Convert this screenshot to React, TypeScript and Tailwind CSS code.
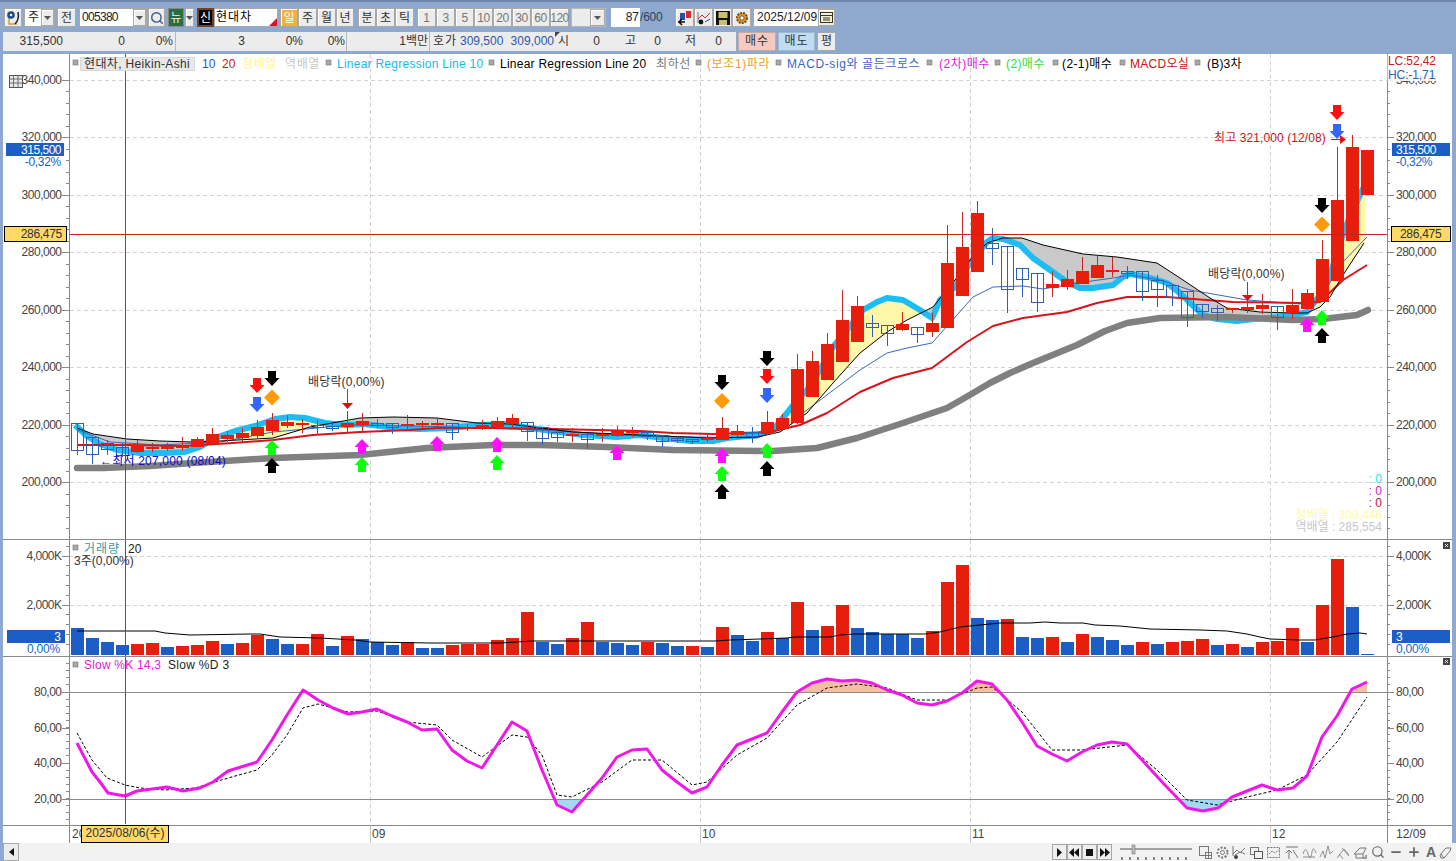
import React from 'react';
import { Search, Minus, Plus } from 'lucide-react';

type Pt = [number, number];
type C = [number, number, number, number, number];

const RED = '#e71e0c';
const BLUE = '#1b5fc6';
const HOLLOW = '#2a62b8';
const CROSS = '#e01c1c';

// body top, body bottom, wick top, wick bottom, red? (read off the 3x crops)
const c4: C[] = [
  [190, 270, 190, 285, 0], [230, 283, 230, 312, 0], [250, 268, 240, 285, 0], [262, 285, 250, 290, 0],
  [255, 275, 240, 278, 1], [262, 268, 250, 275, 1], [258, 266, 250, 272, 1], [258, 263, 232, 272, 1],
  [238, 260, 232, 262, 1], [222, 253, 205, 255, 1], [226, 236, 212, 245, 1], [220, 233, 205, 247, 1],
  [202, 228, 180, 235, 1], [180, 214, 158, 225, 1], [187, 198, 165, 205, 1], [188, 191, 178, 220, 1],
  [194, 202, 180, 225, 0], [197, 200, 188, 212, 0], [190, 200, 152, 220, 1], [183, 194, 160, 215, 1],
  [188, 190, 178, 205, 0], [190, 200, 190, 222, 0], [193, 197, 166, 212, 1], [189, 192, 182, 205, 1],
  [189, 193, 178, 205, 1], [190, 217, 190, 240, 0], [201, 205, 192, 212, 1], [195, 205, 180, 210, 1],
  [184, 201, 170, 207, 1], [175, 192, 162, 205, 1], [185, 212, 185, 242, 0],
];
const c5: C[] = [
  [680, 715, 680, 735, 0], [697, 712, 697, 725, 0], [702, 708, 685, 725, 1], [703, 717, 700, 748, 0],
  [703, 708, 685, 725, 1], [692, 708, 678, 712, 1], [692, 698, 682, 710, 1], [697, 708, 697, 720, 0],
  [705, 723, 705, 740, 0], [713, 717, 708, 730, 0], [718, 723, 718, 732, 0], [713, 720, 702, 725, 1],
  [684, 719, 651, 719, 1], [694, 705, 675, 712, 1], [697, 707, 680, 730, 0], [667, 703, 633, 705, 1],
  [655, 687, 642, 690, 1], [507, 670, 462, 672, 1], [483, 590, 453, 592, 1], [432, 540, 400, 540, 1],
  [360, 485, 270, 485, 1], [318, 425, 288, 425, 1], [370, 380, 345, 410, 0], [376, 400, 375, 437, 0],
  [373, 389, 336, 392, 1], [382, 403, 382, 428, 0], [370, 395, 340, 410, 1], [190, 383, 75, 385, 1],
  [141, 287, 37, 287, 1], [40, 215, 3, 215, 1], [130, 145, 85, 195, 0], [137, 268, 137, 340, 0],
];
const c6: C[] = [
  [203, 238, 203, 292, 0], [220, 307, 220, 337, 0], [252, 265, 212, 290, 1], [238, 260, 210, 270, 1],
  [213, 252, 172, 252, 1], [194, 233, 165, 235, 1], [211, 214, 172, 232, 1], [212, 215, 198, 238, 0],
  [214, 272, 214, 302, 0], [241, 268, 226, 320, 0], [256, 292, 256, 318, 0], [274, 352, 274, 380, 0],
  [313, 334, 313, 354, 0], [325, 337, 315, 362, 0], [325, 331, 325, 340, 1], [322, 329, 300, 338, 1],
  [316, 327, 283, 343, 1], [319, 352, 319, 390, 0], [314, 338, 268, 358, 1], [280, 327, 268, 328, 1],
  [178, 305, 120, 305, 1], [0, 242, -159, 242, 1], [-159, 123, -195, 123, 1], [-150, -15, -150, -15, 1],
];

const candles = [
  ...c4.map((c): C => [360 + c[0] / 3, 360 + c[1] / 3, 360 + c[2] / 3, 360 + c[3] / 3, c[4]]),
  ...[...c5, ...c6].map((c): C => [200 + c[0] / 3, 200 + c[1] / 3, 200 + c[2] / 3, 200 + c[3] / 3, c[4]]),
];

// volume bar tops in crop pixels; red flag follows
const vol: [number, number][] = [
  [294, 0], [324, 0], [336, 0], [345, 0], [342, 1], [339, 1], [351, 0], [348, 1], [345, 1], [333, 1], [342, 0], [339, 1],
  [315, 1], [327, 0], [342, 0], [342, 1], [312, 1], [348, 0], [318, 1], [327, 0], [336, 0], [345, 0], [336, 1], [354, 0],
  [354, 0], [345, 1], [342, 1], [342, 1], [330, 1], [324, 1], [246, 1], [336, 0], [342, 0], [324, 1], [276, 1], [336, 0],
  [339, 0], [345, 0], [336, 1], [339, 0], [348, 0], [348, 1], [351, 0], [291, 1], [315, 0], [333, 0], [306, 1], [324, 0],
  [216, 1], [300, 0], [288, 1], [225, 1], [294, 0], [306, 0], [312, 0], [312, 0], [324, 0], [303, 1], [156, 1], [105, 1],
  [264, 0], [270, 0], [267, 1], [321, 0], [324, 0], [321, 1], [336, 0], [312, 1], [321, 0], [330, 0], [345, 0], [336, 1],
  [342, 0], [336, 1], [333, 1], [327, 1], [345, 0], [342, 1], [351, 0], [336, 1], [333, 1], [294, 1], [336, 0], [225, 1],
  [87, 1], [231, 0], [372, 0],
];

const volMa: Pt[] = [
  [77, 631], [155, 631], [165, 633], [190, 635], [250, 634], [260, 634], [280, 637], [320, 638], [355, 640], [370, 642],
  [430, 643], [500, 643], [533, 641], [550, 641], [670, 641], [715, 641], [730, 640], [760, 639], [787, 638], [795, 637],
  [830, 637], [840, 635], [855, 634], [925, 634], [940, 632], [960, 627], [1000, 623], [1030, 623], [1045, 622], [1060, 623],
  [1083, 623], [1095, 625], [1120, 626], [1140, 628], [1150, 629], [1200, 630], [1227, 631], [1247, 634], [1260, 637],
  [1270, 639], [1300, 640], [1315, 640], [1333, 637], [1347, 634], [1360, 633], [1367, 634],
];

const cyan: Pt[] = [
  [75, 425], [87, 436], [100, 444], [117, 450], [140, 453], [165, 453], [185, 452], [200, 447], [215, 438], [235, 431],
  [255, 426], [275, 419], [290, 417], [305, 418], [325, 423], [345, 425], [365, 424], [395, 428], [420, 429], [450, 428],
  [480, 425], [505, 424], [530, 428], [560, 432], [583, 435], [617, 437], [640, 435], [663, 438], [690, 441], [713, 441],
  [727, 438], [757, 435], [773, 430], [787, 413], [797, 400], [807, 390], [820, 370], [833, 347], [847, 330], [863, 310],
  [877, 302], [887, 298], [903, 300], [920, 310], [932, 318], [940, 300], [955, 287], [970, 263], [987, 242], [993, 238],
  [1003, 239], [1020, 245], [1033, 258], [1050, 270], [1067, 282], [1080, 288], [1093, 288], [1113, 285], [1123, 277],
  [1130, 274], [1147, 277], [1167, 283], [1180, 293], [1190, 303], [1203, 315], [1217, 319], [1237, 321], [1253, 319],
  [1277, 317], [1293, 315], [1307, 312], [1320, 295], [1330, 275], [1345, 228], [1360, 195], [1367, 180],
];
const black: Pt[] = [
  [77, 428], [93, 434], [127, 439], [160, 441], [193, 442], [220, 441], [273, 438], [310, 427], [360, 418], [393, 417],
  [437, 418], [477, 423], [510, 424], [540, 428], [573, 432], [640, 435], [707, 438], [757, 437], [780, 432], [807, 413],
  [833, 383], [860, 353], [887, 332], [907, 320], [933, 307], [955, 280], [970, 260], [987, 243], [1003, 238], [1022, 238],
  [1043, 245], [1083, 254], [1117, 257], [1157, 263], [1183, 280], [1210, 298], [1227, 308], [1260, 312], [1293, 313],
  [1307, 313], [1320, 307], [1330, 297], [1343, 275], [1364, 243],
];
const thin: Pt[] = [
  [78, 430], [110, 442], [160, 445], [220, 442], [273, 432], [350, 425], [420, 426], [540, 430], [640, 436], [757, 438],
  [790, 425], [803, 413], [860, 370], [887, 353], [907, 348], [932, 343], [957, 315], [973, 297], [993, 287], [1023, 286],
  [1043, 289], [1077, 283], [1113, 278], [1130, 275], [1160, 280], [1190, 290], [1247, 300], [1300, 304], [1320, 300],
  [1340, 265], [1367, 237],
];
const redMa: Pt[] = [
  [77, 445], [127, 445], [183, 446], [233, 443], [273, 440], [313, 435], [360, 432], [410, 430], [437, 428], [493, 428],
  [553, 429], [640, 431], [673, 433], [713, 434], [740, 433], [770, 432], [800, 425], [827, 413], [860, 392], [893, 378],
  [932, 368], [967, 342], [993, 326], [1023, 318], [1067, 312], [1097, 303], [1127, 297], [1167, 297], [1193, 299], [1233, 302],
  [1300, 303], [1320, 302], [1343, 280], [1367, 265],
];
const grayMa: Pt[] = [
  [77, 468], [103, 468], [150, 466], [193, 463], [273, 458], [360, 455], [427, 448], [493, 445], [540, 445], [607, 447],
  [673, 450], [773, 451], [817, 448], [857, 438], [900, 424], [947, 408], [968, 396], [990, 383], [1010, 373], [1033, 363], [1077, 345],
  [1105, 331], [1127, 323], [1160, 318], [1227, 317], [1293, 320], [1323, 319], [1357, 315], [1368, 310],
];

const slowK: Pt[] = [
  [77, 743], [92, 772], [100, 782], [108, 793], [125, 796], [137, 791], [167, 787], [183, 791], [200, 788], [213, 782], [228, 771],
  [257, 762], [272, 740], [287, 715], [303, 690], [318, 700], [333, 708], [348, 714], [362, 712], [377, 709], [392, 716],
  [407, 722], [422, 730], [437, 729], [452, 750], [467, 761], [482, 768], [497, 745], [512, 722], [527, 731], [542, 770],
  [557, 805], [572, 812], [587, 795], [602, 778], [617, 757], [632, 750], [647, 749], [662, 770], [677, 782], [692, 793],
  [707, 787], [722, 765], [737, 745], [752, 739], [767, 733], [782, 712], [797, 692], [812, 683], [827, 679], [842, 681],
  [857, 680], [872, 683], [887, 690], [902, 695], [917, 703], [932, 705], [947, 701], [962, 693], [977, 681], [992, 684],
  [1007, 700], [1022, 722], [1037, 746], [1052, 754], [1067, 761], [1082, 752], [1097, 745], [1112, 742], [1127, 744],
  [1142, 760], [1163, 783], [1187, 808], [1203, 811], [1218, 808], [1232, 797], [1262, 785], [1277, 790], [1293, 788],
  [1307, 776], [1322, 737], [1337, 716], [1352, 689], [1367, 682],
];
const slowD: Pt[] = [
  [77, 733], [92, 760], [107, 778], [125, 785], [140, 788], [165, 790], [195, 788], [228, 778], [257, 770], [272, 755],
  [287, 735], [303, 708], [318, 704], [333, 708], [348, 712], [377, 711], [407, 722], [437, 725], [452, 740], [482, 757],
  [512, 735], [527, 737], [542, 755], [557, 795], [572, 797], [602, 782], [632, 760], [662, 760], [692, 785], [707, 782],
  [737, 755], [767, 738], [797, 705], [827, 688], [857, 684], [887, 688], [917, 700], [947, 700], [977, 688], [992, 687],
  [1022, 712], [1052, 750], [1082, 750], [1127, 745], [1157, 770], [1187, 800], [1217, 805], [1247, 797], [1277, 790],
  [1307, 775], [1337, 742], [1367, 697],
];

const toStr = (p: Pt[]) => p.map((q) => q.join(',')).join(' ');

const at = (p: Pt[], x: number) => {
  if (x <= p[0][0]) return p[0][1];
  for (let i = 1; i < p.length; i++) {
    if (x <= p[i][0]) {
      const t = (x - p[i - 1][0]) / (p[i][0] - p[i - 1][0]);
      return p[i - 1][1] + t * (p[i][1] - p[i - 1][1]);
    }
  }
  return p[p.length - 1][1];
};

// cloud between the cyan and black lines: yellow while cyan is on top, gray otherwise
const buildCloud = () => {
  const out: { up: boolean; pts: string }[] = [];
  let cur: { up: boolean; a: Pt[]; b: Pt[] } | null = null;
  const flush = () => {
    if (cur) out.push({ up: cur.up, pts: toStr([...cur.a, ...cur.b.reverse()]) });
  };
  for (let x = 77; x <= 1366; x++) {
    const c = at(cyan, x);
    const k = at(black, x);
    const up = c < k;
    if (!cur || cur.up !== up) {
      flush();
      cur = { up, a: [], b: [] };
    }
    cur.a.push([x, c]);
    cur.b.push([x, k]);
  }
  flush();
  return out;
};

const Up = ({ x, y, c }: { x: number; y: number; c: string }) => (
  <polygon points={`${x},${y} ${x + 7.5},${y + 8} ${x + 4},${y + 8} ${x + 4},${y + 15} ${x - 4},${y + 15} ${x - 4},${y + 8} ${x - 7.5},${y + 8}`} fill={c} />
);
const Down = ({ x, y, c }: { x: number; y: number; c: string }) => (
  <polygon points={`${x - 4},${y} ${x + 4},${y} ${x + 4},${y + 7} ${x + 7.5},${y + 7} ${x},${y + 15} ${x - 7.5},${y + 7} ${x - 4},${y + 7}`} fill={c} />
);
const Diamond = ({ x, y }: { x: number; y: number }) => (
  <polygon points={`${x},${y - 8} ${x + 8},${y} ${x},${y + 8} ${x - 8},${y}`} fill="#ff9a0a" />
);

const GRID_X = [370, 700, 970, 1270];
const CROSS_X = 125.5;
const TEXT = '#444';

const Ticks = ({ major, from, to, step }: { major: number; from: number; to: number; step: number }) => {
  const ys: number[] = [];
  for (let y = major; y >= from; y -= step) ys.push(y);
  for (let y = major + step; y <= to; y += step) ys.push(y);
  return (
    <g stroke="#888" shapeRendering="crispEdges">
      {ys.map((y) => (
        <g key={y}>
          <line x1={66} x2={69} y1={y} y2={y} />
          <line x1={1387} x2={1390} y1={y} y2={y} />
        </g>
      ))}
    </g>
  );
};

const AxisLabel = ({ y, t }: { y: number; t: string }) => (
  <g>
    <line x1={62} x2={69} y1={y} y2={y} stroke="#888" shapeRendering="crispEdges" />
    <line x1={1387} x2={1394} y1={y} y2={y} stroke="#888" shapeRendering="crispEdges" />
    <text x={61.5} y={y + 3.5} textAnchor="end" fill={TEXT} fontSize={12} letterSpacing={-0.5}>{t}</text>
    <text x={1396} y={y + 3.5} fill={TEXT} fontSize={12} letterSpacing={-0.5}>{t}</text>
  </g>
);

const VGrid = ({ y1, y2 }: { y1: number; y2: number }) => (
  <g stroke="#d0d0d0" strokeDasharray="4 3" shapeRendering="crispEdges">
    {GRID_X.map((x) => <line key={x} x1={x + 0.5} x2={x + 0.5} y1={y1} y2={y2} />)}
  </g>
);

const Axes = ({ y1, y2 }: { y1: number; y2: number }) => (
  <g stroke="#8a8a8a" shapeRendering="crispEdges">
    <line x1={69.5} x2={69.5} y1={y1} y2={y2} />
    <line x1={1387.5} x2={1387.5} y1={y1} y2={y2} />
  </g>
);

const Square = ({ x, y }: { x: number; y: number }) => (
  <rect x={x} y={y} width={5} height={5} fill="#a8a8a8" stroke="#777" strokeWidth={0.6} />
);

const CloseBox = ({ y }: { y: number }) => (
  <g>
    <rect x={1443} y={y} width={7} height={7} fill="#444" />
    <path d={`M1445 ${y + 2}l3 3m0-3l-3 3`} stroke="#fff" strokeWidth={0.8} />
  </g>
);

const PricePanel = () => {
  const cloud = buildCloud();
  const hLines = [80, 137, 194.5, 252, 310, 367, 425, 482];
  const labels = ['340,000', '320,000', '300,000', '280,000', '260,000', '240,000', '220,000', '200,000'];
  return (
    <svg width={1449} height={485} viewBox="3 54 1449 485" className="block">
      <g stroke="#d4d4d4" strokeDasharray="4 3" shapeRendering="crispEdges">
        {hLines.map((y) => <line key={y} x1={70} x2={1387} y1={Math.round(y) + 0.5} y2={Math.round(y) + 0.5} />)}
      </g>
      <VGrid y1={54} y2={539} />
      {cloud.map((s, i) => <polygon key={i} points={s.pts} fill={s.up ? '#fff8a8' : '#c9c9c9'} />)}
      <polyline points={toStr(cyan)} fill="none" stroke="#1dbdf3" strokeWidth={6} strokeLinejoin="round" />
      <polyline points={toStr(grayMa)} fill="none" stroke="#808080" strokeWidth={6.5} strokeLinecap="round" strokeLinejoin="round" />
      <polyline points={toStr(thin)} fill="none" stroke="#3a68b8" strokeWidth={1} />
      <polyline points={toStr(redMa)} fill="none" stroke="#d8141a" strokeWidth={2} strokeLinejoin="round" />
      <polyline points={toStr(black)} fill="none" stroke="#000" strokeWidth={1} />
      <g shapeRendering="crispEdges">
        {candles.map((c, i) => {
          const cx = Math.round(77 + 15 * i) + 0.5;
          const top = Math.round(c[0]);
          const bot = Math.max(Math.round(c[1]), top + 2);
          const wickColor = c[4] ? '#c8281e' : HOLLOW;
          return (
            <g key={i}>
              <line x1={cx} x2={cx} y1={Math.round(c[2])} y2={Math.round(c[3])} stroke={wickColor} />
              {c[4] ? (
                <rect x={cx - 6.5} y={top} width={13} height={bot - top} fill={RED} />
              ) : (
                <rect x={cx - 6} y={top + 0.5} width={12} height={bot - top} fill="none" stroke={HOLLOW} />
              )}
            </g>
          );
        })}
      </g>
      <Down x={257} y={378} c="#ff1010" />
      <Down x={257} y={397} c="#3366ff" />
      <Down x={272} y={371} c="#000" />
      <Diamond x={272} y={397.5} />
      <Up x={272} y={440} c="#10ff10" />
      <Up x={272} y={458} c="#000" />
      <Up x={362} y={439} c="#ff10ff" />
      <Up x={362} y={457} c="#10ff10" />
      <Up x={437} y={436} c="#ff10ff" />
      <Up x={497} y={437} c="#ff10ff" />
      <Up x={497} y={455} c="#10ff10" />
      <Up x={617} y={445} c="#ff10ff" />
      <Down x={722} y={375} c="#000" />
      <Diamond x={722} y={401} />
      <Up x={722} y={448} c="#ff10ff" />
      <Up x={722} y={466} c="#10ff10" />
      <Up x={722} y={484} c="#000" />
      <Down x={767} y={351} c="#000" />
      <Down x={767} y={369} c="#ff1010" />
      <Down x={767} y={388} c="#3366ff" />
      <Up x={767} y={443} c="#10ff10" />
      <Up x={767} y={461} c="#000" />
      <Down x={1337} y={105} c="#ff1010" />
      <Down x={1337} y={124} c="#3366ff" />
      <Down x={1322} y={198} c="#000" />
      <Diamond x={1322} y={224.5} />
      <Up x={1307} y={317} c="#ff10ff" />
      <Up x={1322} y={310} c="#10ff10" />
      <Up x={1322} y={328} c="#000" />

      {/* ex-dividend markers */}
      <line x1={347.5} x2={347.5} y1={389} y2={404} stroke="#d82020" />
      <polygon points="342,403 353,403 347.5,409" fill="#e01010" />
      <text x={308} y={386} fontSize={12} fill="#333" letterSpacing={0.15}>배당락(0,00%)</text>
      <line x1={1247.5} x2={1247.5} y1={282} y2={296} stroke="#d82020" />
      <polygon points="1242,295 1253,295 1247.5,301" fill="#e01010" />
      <text x={1208} y={278} fontSize={12} fill="#333" letterSpacing={0.15}>배당락(0,00%)</text>

      {/* high / low tags */}
      <text x={100} y={465} fontSize={12} fill="#0a0ad0" letterSpacing={0.2}>←최저 207,000 (08/04)</text>
      <text x={1214} y={142} fontSize={12} fill="#c01818" letterSpacing={0.1}>최고 321,000 (12/08)</text>
      <line x1={1331} x2={1343} y1={139.5} y2={139.5} stroke="#e01010" />
      <polygon points="1340,135 1346,139.5 1340,144" fill="#e01010" />

      <line x1={CROSS_X} x2={CROSS_X} y1={54} y2={539} stroke={CROSS} shapeRendering="crispEdges" />
      <line x1={70} x2={1387} y1={234.5} y2={234.5} stroke="#c8201c" shapeRendering="crispEdges" />

      <Axes y1={54} y2={539} />
      <Ticks major={425} from={72} to={536} step={11.5} />
      {hLines.map((y, i) => <AxisLabel key={y} y={Math.round(y)} t={labels[i]} />)}

      {/* current price tags */}
      <rect x={6} y={143} width={58} height={13} fill={BLUE} />
      <text x={61} y={153.5} textAnchor="end" fontSize={12} fill="#fff" letterSpacing={-0.5}>315,500</text>
      <text x={61} y={165.5} textAnchor="end" fontSize={12} fill={BLUE} letterSpacing={-0.3}>-0,32%</text>
      <rect x={1392} y={143} width={58} height={13} fill={BLUE} />
      <text x={1396} y={153.5} fontSize={12} fill="#fff" letterSpacing={-0.5}>315,500</text>
      <text x={1396} y={165.5} fontSize={12} fill={BLUE} letterSpacing={-0.3}>-0,32%</text>

      {/* crosshair value tags */}
      <rect x={4.5} y={226.5} width={62} height={15} fill="#ffd966" stroke="#000" />
      <text x={62} y={238} textAnchor="end" fontSize={12} fill="#333" letterSpacing={-0.3}>286,475</text>
      <rect x={1391.5} y={226.5} width={59} height={15} fill="#ffd966" stroke="#000" />
      <text x={1400} y={238} fontSize={12} fill="#333" letterSpacing={-0.3}>286,475</text>

      <rect x={1387.5} y={55} width={60} height={26} fill="#fff" opacity={0.85} />
      <text x={1388} y={65} fontSize={12} fill="#c82020" letterSpacing={-0.1}>LC:52,42</text>
      <text x={1388} y={79} fontSize={12} fill="#2a62b8" letterSpacing={-0.1}>HC:-1,71</text>

      <g fontSize={12} textAnchor="end">
        <text x={1382} y={483} fill="#2ce0f0">: 0</text>
        <text x={1382} y={495} fill="#d020d0">: 0</text>
        <text x={1382} y={507} fill="#c01040">: 0</text>
        <text x={1382} y={519} fill="#fff8a8">정배열 : 308,446</text>
        <text x={1382} y={531} fill="#c8c8c8">역배열 : 285,554</text>
      </g>

      {/* table icon */}
      <g stroke="#555" fill="#e8e8e8">
        <rect x={9.5} y={75.5} width={13} height={12} />
        <path d="M9.5 79h13M9.5 83h13M13.5 75.5v12M18 75.5v12" fill="none" strokeWidth={0.8} />
      </g>

      {/* legend squares */}
      <Square x={73} y={60} />
      {[326, 489, 696, 776, 927, 995, 1053, 1120, 1195].map((x) => <Square key={x} x={x} y={60} />)}
    </svg>
  );
};

const VolumePanel = () => (
  <svg width={1449} height={116} viewBox="3 540 1449 116" className="block">
    <g stroke="#d4d4d4" strokeDasharray="4 3" shapeRendering="crispEdges">
      <line x1={70} x2={1387} y1={556.5} y2={556.5} />
      <line x1={70} x2={1387} y1={605.5} y2={605.5} />
    </g>
    <VGrid y1={540} y2={656} />
    <g shapeRendering="crispEdges">
      {vol.map((b, i) => {
        const top = Math.round(530 + b[0] / 3);
        return <rect key={i} x={71 + 15 * i} y={top} width={13} height={655 - top} fill={b[1] ? RED : BLUE} />;
      })}
    </g>
    <polyline points={toStr(volMa)} fill="none" stroke="#000" strokeWidth={1} />
    <line x1={CROSS_X} x2={CROSS_X} y1={540} y2={656} stroke={CROSS} shapeRendering="crispEdges" />
    <Axes y1={540} y2={656} />
    <Ticks major={605} from={546} to={652} step={9.8} />
    <AxisLabel y={556} t="4,000K" />
    <AxisLabel y={605} t="2,000K" />
    <rect x={7} y={630} width={58} height={13} fill={BLUE} />
    <text x={61} y={641} textAnchor="end" fontSize={12} fill="#fff">3</text>
    <text x={60} y={653} textAnchor="end" fontSize={12} fill={BLUE} letterSpacing={-0.2}>0,00%</text>
    <rect x={1392} y={630} width={58} height={13} fill={BLUE} />
    <text x={1396} y={641} fontSize={12} fill="#fff">3</text>
    <text x={1396} y={653} fontSize={12} fill={BLUE} letterSpacing={-0.2}>0,00%</text>
    <Square x={73} y={545} />
    <text x={84} y={553} fontSize={12} fill="#3a9a9a" letterSpacing={1}>거래량</text>
    <text x={128} y={553} fontSize={12} fill="#222">20</text>
    <text x={74} y={565} fontSize={12} fill="#333">3주(0,00%)</text>
    <CloseBox y={542} />
  </svg>
);

const StochPanel = () => {
  const areaK = `${toStr(slowK)} 1367,746 77,746`;
  return (
    <svg width={1449} height={169} viewBox="3 656 1449 169" className="block">
      <defs>
        <clipPath id="over"><rect x={70} y={656} width={1317} height={36} /></clipPath>
        <clipPath id="under"><rect x={70} y={799} width={1317} height={26} /></clipPath>
      </defs>
      <line x1={3} x2={1452} y1={656.5} y2={656.5} stroke="#8a8a8a" shapeRendering="crispEdges" />
      <VGrid y1={657} y2={825} />
      <polygon points={areaK} fill="#f6bfa2" clipPath="url(#over)" />
      <polygon points={areaK} fill="#a4d9f2" clipPath="url(#under)" />
      <g stroke="#8a8a8a" shapeRendering="crispEdges">
        <line x1={70} x2={1387} y1={692.5} y2={692.5} />
        <line x1={70} x2={1387} y1={799.5} y2={799.5} />
      </g>
      <polyline points={toStr(slowD)} fill="none" stroke="#000" strokeWidth={1} strokeDasharray="3 2" />
      <polyline points={toStr(slowK)} fill="none" stroke="#f018e8" strokeWidth={3} strokeLinejoin="round" />
      <line x1={CROSS_X} x2={CROSS_X} y1={657} y2={824} stroke={CROSS} shapeRendering="crispEdges" />
      <Axes y1={657} y2={825} />
      <Ticks major={692} from={660} to={822} step={7.1} />
      <AxisLabel y={692} t="80,00" />
      <AxisLabel y={728} t="60,00" />
      <AxisLabel y={763} t="40,00" />
      <AxisLabel y={799} t="20,00" />
      <Square x={73} y={662} />
      <text x={84} y={669} fontSize={12} fill="#e020d8" letterSpacing={0.2}>Slow %K 14,3</text>
      <text x={168} y={669} fontSize={12} fill="#222" letterSpacing={0.3}>Slow %D 3</text>
      <CloseBox y={658} />
    </svg>
  );
};

const DateAxis = () => (
  <div className="relative h-[18px] border-t border-[#8a8a8a] bg-white text-[12px] text-[#444] leading-[17px]">
    <div className="absolute left-[66px] top-0 h-full w-px bg-[#8a8a8a]" />
    <div className="absolute left-[1384px] top-0 h-full w-px bg-[#8a8a8a]" />
    <span className="absolute left-[69px] top-0">20</span>
    <span className="absolute left-[367px] top-0 h-full border-l border-[#c8c8c8] pl-[1px]">09</span>
    <span className="absolute left-[697px] top-0 h-full border-l border-[#c8c8c8] pl-[1px]">10</span>
    <span className="absolute left-[967px] top-0 h-full border-l border-[#c8c8c8] pl-[1px]">11</span>
    <span className="absolute left-[1267px] top-0 h-full border-l border-[#c8c8c8] pl-[1px]">12</span>
    <span className="absolute left-[1393px] top-0">12/09</span>
    <span className="absolute left-[78px] top-[-1px] h-[18px] w-[88px] border border-black bg-[#ffd966] text-center text-[#333] leading-[15px]">2025/08/06(수)</span>
  </div>
);

const LEGEND: { t: string; x: string; c: string }[] = [
  { t: '10', x: 'left-[199px]', c: 'text-[#2a56c0]' },
  { t: '20', x: 'left-[219px]', c: 'text-[#c81818]' },
  { t: '정배열', x: 'left-[239px]', c: 'text-[#fff59a] tracking-[0.6px]' },
  { t: '역배열', x: 'left-[282px]', c: 'text-[#c8c8c8] tracking-[0.6px]' },
  { t: 'Linear Regression Line 10', x: 'left-[334px]', c: 'text-[#22b8e6] tracking-[0.25px]' },
  { t: 'Linear Regression Line 20', x: 'left-[497px]', c: 'text-black tracking-[0.25px]' },
  { t: '최하선', x: 'left-[653px]', c: 'text-[#777] tracking-[0.6px]' },
  { t: '(보조1)파라', x: 'left-[704px]', c: 'text-[#f0a020] tracking-[0.6px]' },
  { t: 'MACD-sig와 골든크로스', x: 'left-[784px]', c: 'text-[#3c64c8] tracking-[0.6px]' },
  { t: '(2차)매수', x: 'left-[936px]', c: 'text-[#e020e0] tracking-[0.5px]' },
  { t: '(2)매수', x: 'left-[1003px]', c: 'text-[#30e040] tracking-[0.4px]' },
  { t: '(2-1)매수', x: 'left-[1059px]', c: 'text-black tracking-[0.4px]' },
  { t: 'MACD오실', x: 'left-[1127px]', c: 'text-[#cc1010] tracking-[0.3px]' },
  { t: '(B)3차', x: 'left-[1204px]', c: 'text-black tracking-[0.2px]' },
];

const Legend = () => (
  <div className="absolute left-0 top-0 h-[20px] w-full text-[12px] leading-[17px]">
    <span className="absolute left-[77px] top-[3px] h-[14px] w-[115px] border border-[#d8d8d8] bg-[#e8e8e8] pl-[3px] tracking-[0.35px] text-[#333] leading-[12px]">현대차, Heikin-Ashi</span>
    {LEGEND.map((l) => (
      <span key={l.t} className={`absolute top-[2px] whitespace-nowrap ${l.x} ${l.c}`}>{l.t}</span>
    ))}
  </div>
);

const btn = 'flex h-full shrink-0 items-center justify-center border border-[#a8a8a8] bg-[#ececec] text-[#333] shadow-[inset_1px_1px_0_#fff]';

const Caret = ({ className }: { className: string }) => (
  <div className={`${btn} ${className}`}>
    <svg width="7" height="4" viewBox="0 0 7 4"><polygon points="0,0 7,0 3.5,4" fill="#555" /></svg>
  </div>
);

const Step = ({ t, className, muted }: { t: string; className: string; muted?: boolean }) => (
  <div className={`${btn} ${className} ${muted ? 'text-[#777]' : ''}`}>{t}</div>
);

const Toolbar = () => (
  <div className="ml-[4px] mt-[6px] flex h-[19px] items-stretch text-[12px]">
    <div className={`${btn} w-[18px]`}>
      <svg width="16" height="16" viewBox="0 0 16 16">
        <path d="M4 8v6h8" fill="none" stroke="#c8a040" strokeWidth="1.5" />
        <path d="M13 2c1 5 0 9-3 12" fill="none" stroke="#222" strokeWidth="1.5" />
        <circle cx="6" cy="5" r="3.8" fill="#1f4a80" />
        <circle cx="6" cy="5" r="1.3" fill="#e8e8f0" />
      </svg>
    </div>
    <div className="ml-[2px] flex h-full w-[31px] border border-[#a8a8a8] bg-white text-[#222]">
      <span className="flex-1 pl-[3px] leading-[17px]">주</span>
      <Caret className="w-[13px]" />
    </div>
    <Step t="전" className="ml-[2px] w-[19px]" />
    <div className="ml-[3px] flex h-full w-[68px] border border-[#a8a8a8] bg-white text-[#222]">
      <span className="flex-1 pl-[2px] tracking-[-0.7px] leading-[17px]">005380</span>
      <Caret className="w-[13px]" />
    </div>
    <div className={`${btn} ml-[1px] w-[17px]`}><Search size={14} color="#3a5a8a" strokeWidth={2.4} /></div>
    <div className="ml-[3px] flex h-full w-[16px] items-center justify-center border border-[#888] bg-[#2e6b3e] text-[#e8f5e8]">뉴</div>
    <Caret className="ml-[1px] w-[9px]" />
    <div className="ml-[3px] flex h-full w-[17px] items-center justify-center border-2 border-[#6b4526] bg-black text-white">신</div>
    <div className="relative h-full w-[64px] border border-[#a8a8a8] bg-white pl-[1px] tracking-[1px] leading-[17px] text-black">
      현대차
      <span className="absolute bottom-0 right-0 h-0 w-0 border-b-[8px] border-l-[8px] border-b-[#d8142a] border-l-transparent" />
    </div>
    <Step t="일" className="ml-[2px] w-[18px] !bg-[#f2b03c] !text-white" />
    <Step t="주" className="w-[19px]" />
    <Step t="월" className="w-[19px]" />
    <Step t="년" className="w-[18px]" />
    <Step t="분" className="ml-[4px] w-[18px]" />
    <Step t="초" className="w-[19px]" />
    <Step t="틱" className="w-[19px]" />
    {['1', '3', '5', '10', '20', '30', '60', '120'].map((t) => (
      <Step key={t} t={t} muted className={t === '1' ? 'ml-[3px] w-[19px]' : 'w-[19px] tracking-[-0.5px]'} />
    ))}
    <div className="ml-[2px] flex h-full w-[35px] border border-[#b8b8b8] bg-[#ececec]">
      <span className="flex-1" />
      <Caret className="w-[15px]" />
    </div>
    <div className="ml-[5px] h-full w-[29px] bg-white pr-[1px] text-right leading-[19px] text-[#222]">87</div>
    <div className="w-[24px] tracking-[-0.2px] leading-[19px] text-[#2a3f60]">/600</div>
    <div className={`${btn} ml-[11px] w-[19px]`}>
      <svg width="16" height="16" viewBox="0 0 16 16">
        <rect x="3" y="3" width="5" height="7" fill="#2a4fa8" />
        <rect x="9" y="1" width="5" height="7" fill="#d82a2a" />
        <path d="M1 12h7m-3-3l-3 3 3 3" fill="none" stroke="#111" strokeWidth="1.6" />
      </svg>
    </div>
    <div className={`${btn} w-[19px]`}>
      <svg width="16" height="16" viewBox="0 0 16 16">
        <path d="M2 2v11" stroke="#777" />
        <path d="M2 9l4-4 3 3 5-5" fill="none" stroke="#d82a2a" />
        <circle cx="5" cy="12" r="2.4" fill="#111" />
        <path d="M9 12l5-3" stroke="#2a4fa8" />
      </svg>
    </div>
    <div className={`${btn} w-[19px]`}>
      <svg width="16" height="16" viewBox="0 0 16 16">
        <rect x="1" y="1" width="14" height="14" fill="#111" />
        <rect x="3.5" y="2" width="9" height="6" fill="#c8c070" />
        <rect x="4" y="10" width="8" height="5" fill="#c8c070" />
      </svg>
    </div>
    <div className={`${btn} w-[19px]`}>
      <svg width="16" height="16" viewBox="0 0 16 16">
        <circle cx="8" cy="8" r="5" fill="#e8a030" stroke="#6a4a10" strokeDasharray="2 1" strokeWidth="2" />
        <circle cx="8" cy="8" r="2.2" fill="#fff" stroke="#6a4a10" />
      </svg>
    </div>
    <div className="ml-[2px] flex h-full w-[83px] border border-[#a8a8a8] bg-white text-[#222]">
      <span className="flex-1 pl-[3px] leading-[17px]">2025/12/09</span>
      <div className={`${btn} w-[17px]`}>
        <svg width="13" height="11" viewBox="0 0 13 11">
          <rect x=".5" y=".5" width="12" height="10" fill="#f6f0d0" stroke="#333" />
          <path d="M1 3.5h11M3 6h7M3 8h7" stroke="#333" />
        </svg>
      </div>
    </div>
  </div>
);

const Cell = ({ className, t }: { className: string; t: string }) => (
  <span className={`shrink-0 text-right ${className}`}>{t}</span>
);

const QuoteBar = () => (
  <div className="ml-[3px] mt-[5px] flex h-[19px] items-stretch text-[12px] leading-[19px] text-[#333]">
    <div className="flex w-[733px] bg-[#ececec]">
      <Cell t="315,500" className="w-[60px]" />
      <Cell t="0" className="w-[62px]" />
      <Cell t="0%" className="w-[48px]" />
      <Cell t="3" className="ml-[2px] w-[70px] border-l border-[#b8b8b8]" />
      <Cell t="0%" className="w-[58px]" />
      <Cell t="0%" className="w-[42px]" />
      <Cell t="1백만" className="ml-[1px] w-[82px] border-l border-[#b8b8b8]" />
      <span className="ml-[1px] w-[31px] shrink-0 border-l border-[#b8b8b8] pl-[3px] tracking-[1px]">호가</span>
      <Cell t="309,500" className="w-[43px] text-[#2a56b0]" />
      <Cell t="309,000" className="w-[51px] text-[#2a56b0]" />
      <span className="relative ml-[1px] w-[14px] shrink-0 pl-[3px]">
        시
        <span className="absolute left-0 top-0 h-0 w-0 border-r-[5px] border-t-[5px] border-r-transparent border-t-[#444]" />
      </span>
      <Cell t="0" className="w-[31px]" />
      <Cell t="고" className="w-[36px]" />
      <Cell t="0" className="w-[25px]" />
      <Cell t="저" className="w-[35px]" />
      <Cell t="0" className="w-[26px]" />
    </div>
    <div className="ml-[2px] flex w-[38px] items-center justify-center border border-[#c8a8a0] bg-[#f4c9c0] tracking-[1px]">매수</div>
    <div className="ml-[2px] flex w-[37px] items-center justify-center border border-[#a0b8d0] bg-[#bfdcf3] tracking-[1px]">매도</div>
    <div className="ml-[2px] flex w-[19px] items-center justify-center border border-[#a8a8a8] bg-[#ececec]">평</div>
  </div>
);

const Play = ({ children }: { children: React.ReactNode }) => (
  <div className="flex h-[16px] w-[15px] items-center justify-center border border-[#a8a8a8] bg-[#efefef]">
    <svg width="11" height="9" viewBox="0 0 11 9" fill="#111">{children}</svg>
  </div>
);

const ToolIcon = ({ children }: { children: React.ReactNode }) => (
  <svg width="15" height="15" viewBox="0 0 15 15" fill="none" stroke="#777" className="shrink-0">{children}</svg>
);

const ScrollBar = () => (
  <div className="ml-[3px] flex h-[18px] w-[1453px] items-center bg-[#f2f2f2]">
    <div className="flex h-[18px] w-[16px] items-center justify-center border border-[#a8a8a8] bg-[#ececec]">
      <svg width="5" height="8" viewBox="0 0 5 8"><polygon points="5,0 5,8 0,4" fill="#111" /></svg>
    </div>
    <div className="w-[1033px]" />
    <Play><polygon points="3,0 8,4.5 3,9" /></Play>
    <Play><polygon points="5,0 5,9 0,4.5" /><polygon points="10,0 10,9 5,4.5" /></Play>
    <Play><rect x="2" y="1" width="7" height="7" /></Play>
    <Play><polygon points="1,0 1,9 6,4.5" /><polygon points="6,0 6,9 11,4.5" /></Play>
    <svg width="72" height="16" viewBox="0 0 72 16" className="ml-[8px] shrink-0">
      <path d="M0 5h72" stroke="#888" strokeWidth="1.5" />
      <rect x="12" y="1" width="3" height="9" fill="#bbb" stroke="#666" strokeWidth=".5" />
      <path d="M2 13v3M10 13v3M18 13v3M26 13v3M34 13v3M42 13v3M50 13v3M58 13v3M66 13v3" stroke="#222" />
    </svg>
    <div className="ml-[6px] flex w-[252px] items-center gap-[2px]">
      <ToolIcon><rect x="1.5" y="1.5" width="9" height="9" /><rect x="7.5" y="7.5" width="6" height="6" fill="#f2f2f2" /><path d="M10.5 7.5v6M7.5 10.5h6" /></ToolIcon>
      <ToolIcon><circle cx="7.5" cy="7.5" r="5" strokeDasharray="2 1.5" strokeWidth="2" /><circle cx="7.5" cy="7.5" r="2" /></ToolIcon>
      <ToolIcon><path d="M1 1v10M1 9l4-4 3 3 5-5M3 10l5-3 5 2" /><circle cx="4" cy="12" r="2" fill="#444" stroke="none" /></ToolIcon>
      <ToolIcon><rect x="1.5" y="2.5" width="8" height="7" /><rect x="5.5" y="6.5" width="8" height="7" fill="#f2f2f2" stroke="#555" /></ToolIcon>
      <ToolIcon><rect x="1.5" y="2.5" width="12" height="10" strokeDasharray="2 1" /><path d="M3 9l3-3 3 2 4-3" strokeDasharray="2 1" /></ToolIcon>
      <div className="h-[16px] w-px bg-[#bbb]" />
      <ToolIcon><path d="M1 2h12M4 14V5M4 5l-3 3M4 5l3 3M8 5l5 8" /></ToolIcon>
      <ToolIcon><path d="M1 9c2-6 3-6 5 0s3 4 4-2 3-2 4 1M1 12h12" strokeWidth=".8" /></ToolIcon>
      <ToolIcon><path d="M1 12l3-6 2 7 3-12 2 8 3-3" strokeWidth=".8" /></ToolIcon>
      <ToolIcon><path d="M1 13l7-9 5 6M3 9l4 5M6 3l7 8" strokeWidth=".8" /></ToolIcon>
      <ToolIcon><path d="M1 9l6-6h6l-3 6zM3 9v4h7V9" /><path d="M11 14v-2M13 14v-4" stroke="#444" /></ToolIcon>
      <Search size={14} color="#666" className="ml-[1px] shrink-0" />
      <Minus size={14} color="#666" strokeWidth={3} className="ml-[2px] shrink-0" />
      <Plus size={14} color="#666" strokeWidth={3} className="ml-[2px] shrink-0" />
      <span className="ml-[3px] text-[14px] font-bold leading-none text-[#666]">A</span>
      <ToolIcon><path d="M2 10l6-7h5l-1 3-6 7H3zM6 13l-3-4" /></ToolIcon>
    </div>
  </div>
);

export default function App() {
  return (
    <div className="relative flex h-[861px] w-[1456px] flex-col overflow-hidden border-t-2 border-[#6f86a8] bg-[#8fa9ce] [font-family:'Liberation_Sans','Noto_Sans_CJK_KR',sans-serif]">
      <Toolbar />
      <QuoteBar />
      <div className="ml-[3px] mt-[3px] w-[1449px] bg-white">
        <div className="relative">
          <PricePanel />
          <Legend />
        </div>
        <div className="h-px bg-[#8a8a8a]" />
        <VolumePanel />
        <StochPanel />
        <DateAxis />
      </div>
      <ScrollBar />
    </div>
  );
}
